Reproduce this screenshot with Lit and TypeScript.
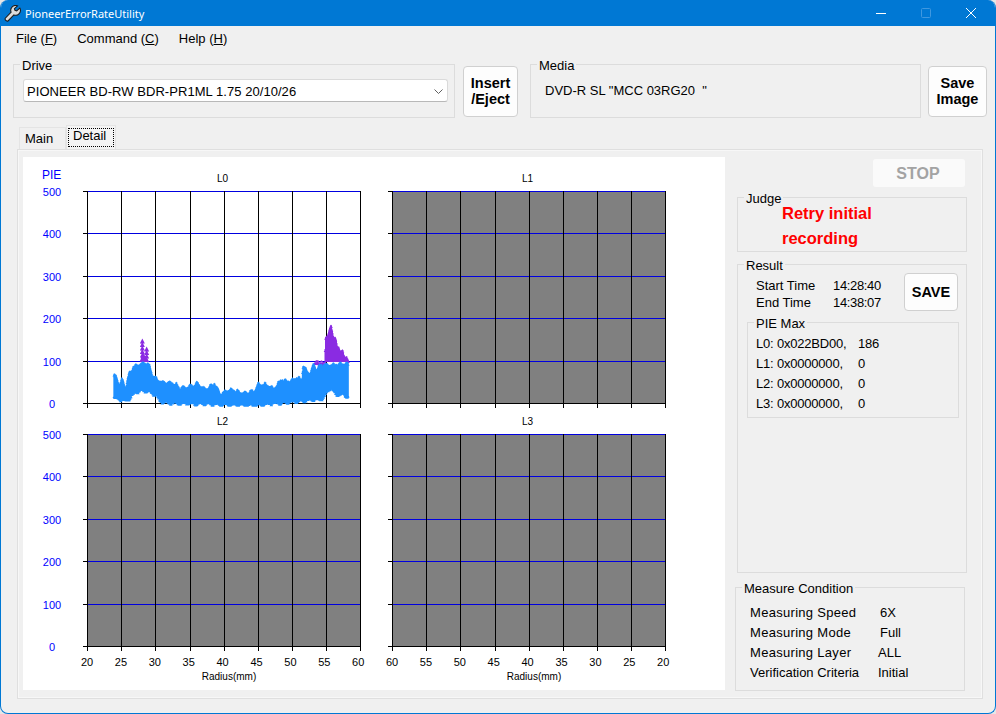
import { LitElement, html, css, svg } from 'lit';
import { customElement } from 'lit/decorators.js';

const V_L = [87, 121, 155, 190, 224, 258, 292, 326, 360];
const V_R = [392, 426, 460, 495, 529, 563, 597, 631, 665];
const H_T = [191, 233, 276, 318, 361, 403];
const H_B = [434, 476, 519, 561, 604, 646];
const Y_LABELS = ['500', '400', '300', '200', '100', '0'];

// points read from a 3x crop of the L0 plot, so convert back to page pixels
const cx = (z: number) => 20 + z / 3;
const cy = (z: number) => 155 + z / 3;

const TOP: number[][] = [[282, 655], [290, 664], [300, 686], [306, 668], [318, 694], [328, 652], [340, 628], [352, 625], [362, 622], [385, 622], [395, 650], [410, 668], [430, 680], [460, 676], [480, 697], [530, 682], [555, 697], [583, 682], [600, 712], [620, 700], [640, 702], [670, 707], [700, 707], [715, 682], [735, 684], [760, 697], [785, 667], [800, 678], [830, 662], [846, 670], [850, 628], [860, 645], [870, 650], [881, 622], [890, 640], [902, 626], [985, 622]];
const BOTTOM: number[][] = [[282, 730], [320, 740], [345, 715], [365, 708], [385, 710], [410, 722], [420, 740], [450, 746], [700, 752], [840, 740], [880, 735], [905, 735], [920, 715], [932, 700], [950, 722], [965, 718], [985, 728]];
const PURPLE: number[][] = [[885, 612], [897, 618], [915, 618], [918, 545], [925, 532], [933, 508], [940, 545], [947, 545], [952, 575], [965, 582], [975, 602], [985, 610]];

function lerp(pts: number[][], x: number) {
  for (let i = 1; i < pts.length; i++) {
    if (x <= pts[i][0]) {
      const t = (x - pts[i - 1][0]) / (pts[i][0] - pts[i - 1][0]);
      return pts[i - 1][1] + (pts[i][1] - pts[i - 1][1]) * t;
    }
  }
  return pts[pts.length - 1][1];
}

function tri(x: number, y: number, s = 1.8) {
  return `M${x - s} ${y + s}L${x} ${y - s}L${x + s} ${y + s}Z`;
}

function buildData() {
  let seed = 1234;
  const rnd = () => {
    seed = (seed * 16807) % 2147483647;
    return seed / 2147483647;
  };
  let blue = '';
  for (let z = 283; z <= 984; z += 1.5) {
    const x = cx(z);
    // small bumps so the outline is not a clean polygon
    const bump = Math.abs(Math.sin(z / 6.5)) * 3.2 + Math.abs(Math.sin(z / 17)) * 1.5;
    const top = Math.max(cy(lerp(TOP, z)) + bump - 1.5 + (rnd() - 0.5) * 2.2, 362);
    const low = Math.abs(Math.sin(z / 8)) * 2.6;
    const bot = Math.min(cy(lerp(BOTTOM, z)) - low + 1 + (rnd() - 0.5) * 1.6, 406);
    blue += tri(x, top + 1) + tri(x, bot - 1) + `M${x - 1} ${top}H${x + 1}V${bot}H${x - 1}Z`;
  }
  let purple = '';
  for (let z = 885; z <= 985; z += 1.5) {
    const x = cx(z);
    const top = cy(lerp(PURPLE, z)) + Math.abs(Math.sin(z / 4)) * 2.5 + (rnd() - 0.5) * 2;
    purple += tri(x, top + 1) + `M${x - 1} ${top}H${x + 1}V362H${x - 1}Z`;
  }
  // the two thin spikes near radius 28
  for (let y = 341; y < 362; y += 3.5) purple += tri(cx(367), y, 2.5);
  for (let y = 349; y < 362; y += 3.5) purple += tri(cx(380), y, 2.5);
  purple += `M${cx(360)} 362L${cx(367)} 352L${cx(388)} 362Z`;
  return { blue, purple };
}

const DATA = buildData();

@customElement('chart-panel')
export class ChartPanel extends LitElement {
  static styles = css`
    :host {
      display: block;
      width: 702px;
      height: 533px;
      background: #fff;
    }
    svg {
      display: block;
    }
    text {
      font-family: 'Liberation Sans', Arial, sans-serif;
    }
    .ylab {
      font-size: 11px;
      fill: #0000ff;
      text-anchor: middle;
    }
    .pie {
      font-size: 12px;
      fill: #0000ff;
    }
    .xlab {
      font-size: 11px;
      fill: #000;
      text-anchor: middle;
    }
    .cap {
      font-size: 10px;
      fill: #000;
      text-anchor: middle;
    }
    .grid {
      shape-rendering: crispEdges;
      stroke-width: 1;
    }
  `;

  plot(vs: number[], hs: number[], title: string, empty: boolean) {
    const x0 = vs[0];
    const x1 = vs[8];
    const y0 = hs[0];
    const y1 = hs[5];
    return svg`
      <text class="cap" x=${(x0 + x1) / 2 - 1} y=${y0 - 9}>${title}</text>
      ${empty ? svg`<rect x=${x0} y=${y0} width=${x1 - x0} height=${y1 - y0} fill="#808080"></rect>` : ''}
      ${hs.map((h) => svg`<line class="grid" x1=${x0 - 4} x2=${x0} y1=${h + 0.5} y2=${h + 0.5} stroke="#000"></line>`)}
      ${hs.slice(0, 5).map((h) => svg`<line class="grid" x1=${x0} x2=${x1 + 1} y1=${h + 0.5} y2=${h + 0.5} stroke="#0000e0"></line>`)}
      <line class="grid" x1=${x0} x2=${x1 + 1} y1=${y1 + 0.5} y2=${y1 + 0.5} stroke="#000"></line>
      ${vs.map((v) => svg`<line class="grid" x1=${v + 0.5} x2=${v + 0.5} y1=${y0} y2=${y1 + 5} stroke="#000"></line>`)}
    `;
  }

  yLabels(hs: number[]) {
    return hs.map((h, i) => svg`<text class="ylab" x="52" y=${h + 5}>${Y_LABELS[i]}</text>`);
  }

  xLabels(start: number, values: number[]) {
    return values.map((v, i) => svg`<text class="xlab" x=${start + 33.9 * i} y="666">${v}</text>`);
  }

  render() {
    return html`
      <svg width="702" height="533" viewBox="23 157 702 533">
        <text class="pie" x="42" y="179">PIE</text>
        ${this.yLabels(H_T)}
        ${this.yLabels(H_B)}
        ${this.plot(V_L, H_T, 'L0', false)}
        ${this.plot(V_R, H_T, 'L1', true)}
        ${this.plot(V_L, H_B, 'L2', true)}
        ${this.plot(V_R, H_B, 'L3', true)}
        <path d=${DATA.purple} fill="#8a2be2"></path>
        <path d=${DATA.blue} fill="#1e90ff"></path>
        ${this.xLabels(87, [20, 25, 30, 35, 40, 45, 50, 55, 60])}
        ${this.xLabels(392, [60, 55, 50, 45, 40, 35, 30, 25, 20])}
        <text class="cap" x="229" y="680">Radius(mm)</text>
        <text class="cap" x="534" y="680">Radius(mm)</text>
      </svg>
    `;
  }
}

@customElement('app-root')
export class AppRoot extends LitElement {
  static styles = css`
    :host {
      display: block;
      width: 996px;
      height: 714px;
      background: #e6e6e6;
      font-family: 'Liberation Sans', Arial, sans-serif;
      font-size: 13px;
      color: #000;
    }
    .window {
      box-sizing: border-box;
      height: 714px;
      display: flex;
      flex-direction: column;
      background: #f0f0f0;
      border: 1px solid #0078d4;
      border-top: none;
      border-radius: 8px;
      overflow: hidden;
    }
    .titlebar {
      flex: none;
      height: 26px;
      display: flex;
      align-items: center;
      background: #0078d4;
      color: #fff;
      padding-left: 3px;
    }
    .title {
      margin-left: 4px;
      font-family: 'Noto Sans', sans-serif;
      font-size: 11px;
    }
    .controls {
      margin-left: auto;
      display: flex;
    }
    .controls svg {
      display: block;
      width: 45px;
      height: 26px;
    }
    .menu {
      flex: none;
      height: 31px;
      display: flex;
      gap: 20px;
      align-items: center;
      padding: 0 0 7px 15px;
      box-sizing: border-box;
      line-height: 15px;
    }
    .menu u {
      text-underline-offset: 1px;
    }
    fieldset {
      margin: 0;
      padding: 0;
      min-width: 0;
      box-sizing: border-box;
      border: 1px solid #dcdcdc;
    }
    legend {
      margin-left: 6px;
      padding: 0 2px;
      height: 15px;
      line-height: 17px;
    }
    .top {
      flex: none;
      height: 61px;
      display: flex;
      align-items: flex-start;
      padding-left: 12px;
    }
    .drive {
      width: 442px;
      height: 61px;
    }
    .combo {
      box-sizing: border-box;
      height: 23px;
      margin: 7px 6px 0 9px;
      padding: 1px 4px 0 3px;
      display: flex;
      align-items: center;
      justify-content: space-between;
      background: #fff;
      border: 1px solid #dadada;
      border-bottom-color: #b8b8b8;
      border-radius: 3px;
      letter-spacing: 0.05px;
    }
    .btn {
      box-sizing: border-box;
      display: flex;
      align-items: center;
      justify-content: center;
      text-align: center;
      background: #fdfdfd;
      border: 1px solid #d0d0d0;
      border-radius: 4px;
      font-weight: 700;
      font-size: 14.5px;
      line-height: 16px;
    }
    .insert {
      width: 55px;
      height: 51px;
      margin: 9px 12px 0 8px;
      padding-bottom: 2px;
    }
    .media {
      width: 391px;
      height: 61px;
    }
    .media div {
      margin: 11px 0 0 14px;
      line-height: 15px;
      white-space: pre;
    }
    .saveimg {
      width: 59px;
      height: 51px;
      margin: 9px 0 0 7px;
      padding-bottom: 2px;
    }
    .tabs {
      flex: none;
      height: 24px;
      margin: 7px 0 0 18px;
      display: flex;
      align-items: flex-end;
    }
    .tab {
      box-sizing: border-box;
      height: 22px;
      width: 47px;
      padding: 3px 0 0 5px;
      line-height: 15px;
      border: 1px solid #e4e4e4;
      border-bottom: none;
    }
    .tab.on {
      height: 24px;
      width: 50px;
      padding: 2px 1px;
      background: #f4f4f4;
    }
    .tab.on span {
      display: block;
      height: 19px;
      line-height: 15px;
      padding-left: 5px;
      box-sizing: border-box;
      outline: 1px dotted #000;
      outline-offset: -1px;
    }
    .panel {
      box-sizing: border-box;
      width: 966px;
      height: 550px;
      margin-left: 16px;
      padding: 7px 0 0 5px;
      display: flex;
      align-items: flex-start;
      border: 1px solid #dfdfdf;
      box-shadow: inset 0 0 0 1px #f7f7f7;
    }
    .side {
      width: 232px;
      margin-left: 10px;
      padding-top: 2px;
      display: flex;
      flex-direction: column;
    }
    .stop {
      box-sizing: border-box;
      width: 92px;
      height: 28px;
      margin-left: 138px;
      padding: 1px 2px 0 0;
      display: flex;
      align-items: center;
      justify-content: center;
      background: #fafafa;
      border-radius: 3px;
      color: #a3a3a3;
      font-weight: 700;
      font-size: 16px;
    }
    .judge {
      width: 230px;
      height: 62px;
      margin: 3px 0 0 2px;
    }
    .verdict {
      margin: -4px 0 0 44px;
      color: #ff0000;
      font-weight: 700;
      font-size: 16.5px;
      line-height: 25px;
    }
    .result {
      width: 230px;
      height: 316px;
      margin: 5px 0 0 2px;
      display: flex;
      flex-direction: column;
    }
    .times-row {
      display: flex;
      margin-top: 1px;
    }
    .times {
      display: grid;
      grid-template-columns: 77px auto;
      grid-auto-rows: 17px;
      align-items: center;
      padding: 4px 0 0 18px;
    }
    .clock {
      letter-spacing: -0.35px;
    }
    .save {
      width: 54px;
      height: 38px;
      margin: 0 8px 0 auto;
    }
    .piemax {
      width: 212px;
      height: 103px;
      margin: 4px 0 0 9px;
    }
    .piemax .rows {
      display: grid;
      grid-template-columns: 102px auto;
      grid-auto-rows: 20px;
      align-items: center;
      padding: 3px 0 0 8px;
      letter-spacing: -0.2px;
    }
    .cond {
      width: 230px;
      height: 111px;
      margin-top: 7px;
    }
    .cond .rows {
      display: grid;
      grid-template-columns: 128px auto;
      grid-auto-rows: 20px;
      align-items: center;
      padding: 7px 0 0 14px;
    }
    .wide {
      letter-spacing: 0.3px;
    }
    .shift {
      padding-left: 2px;
    }
  `;

  render() {
    return html`
      <div class="window">
        <div class="titlebar">
          <svg width="17" height="17" viewBox="0 0 16 16">
            <path d="M14.9 2.9L11.9 5.6L10.3 5L9.8 3.4L12.7 .8A4.6 4.6 0 0 0 6.7 6.8L1.2 12.4A2 2 0 0 0 3.8 15L9.3 9.4A4.6 4.6 0 0 0 14.9 2.9Z" fill="#dcdcdc" stroke="#1c1c1c" stroke-width="1"></path>
          </svg>
          <span class="title">PioneerErrorRateUtility</span>
          <div class="controls">
            <svg viewBox="0 0 45 26"><path d="M16 13.5H26" stroke="#fff"></path></svg>
            <svg viewBox="0 0 45 26"><rect x="16.5" y="8.5" width="9" height="9" rx="1" fill="none" stroke="#3f98e0"></rect></svg>
            <svg viewBox="0 0 45 26"><path d="M16 8L26 18M26 8L16 18" stroke="#fff"></path></svg>
          </div>
        </div>
        <div class="menu">
          <span>File (<u>F</u>)</span>
          <span>Command (<u>C</u>)</span>
          <span>Help (<u>H</u>)</span>
        </div>
        <div class="top">
          <fieldset class="drive">
            <legend>Drive</legend>
            <div class="combo">
              <span>PIONEER BD-RW BDR-PR1ML 1.75 20/10/26</span>
              <svg width="9" height="5" viewBox="0 0 9 5"><path d="M.5 .5L4.5 4.5L8.5 .5" fill="none" stroke="#606060"></path></svg>
            </div>
          </fieldset>
          <div class="btn insert">Insert<br />/Eject</div>
          <fieldset class="media">
            <legend>Media</legend>
            <div>DVD-R SL "MCC 03RG20  "</div>
          </fieldset>
          <div class="btn saveimg">Save<br />Image</div>
        </div>
        <div class="tabs">
          <div class="tab">Main</div>
          <div class="tab on"><span>Detail</span></div>
        </div>
        <div class="panel">
          <chart-panel></chart-panel>
          <div class="side">
            <div class="stop">STOP</div>
            <fieldset class="judge">
              <legend>Judge</legend>
              <div class="verdict">Retry initial<br />recording</div>
            </fieldset>
            <fieldset class="result">
              <legend>Result</legend>
              <div class="times-row">
                <div class="times">
                  <span>Start Time</span><span class="clock">14:28:40</span>
                  <span>End Time</span><span class="clock">14:38:07</span>
                </div>
                <div class="btn save">SAVE</div>
              </div>
              <fieldset class="piemax">
                <legend>PIE Max</legend>
                <div class="rows">
                  <span>L0: 0x022BD00,</span><span>186</span>
                  <span>L1: 0x0000000,</span><span>0</span>
                  <span>L2: 0x0000000,</span><span>0</span>
                  <span>L3: 0x0000000,</span><span>0</span>
                </div>
              </fieldset>
            </fieldset>
            <fieldset class="cond">
              <legend>Measure Condition</legend>
              <div class="rows">
                <span class="wide">Measuring Speed</span><span class="shift">6X</span>
                <span class="wide">Measuring Mode</span><span class="shift">Full</span>
                <span class="wide">Measuring Layer</span><span>ALL</span>
                <span>Verification Criteria</span><span>Initial</span>
              </div>
            </fieldset>
          </div>
        </div>
      </div>
    `;
  }
}
